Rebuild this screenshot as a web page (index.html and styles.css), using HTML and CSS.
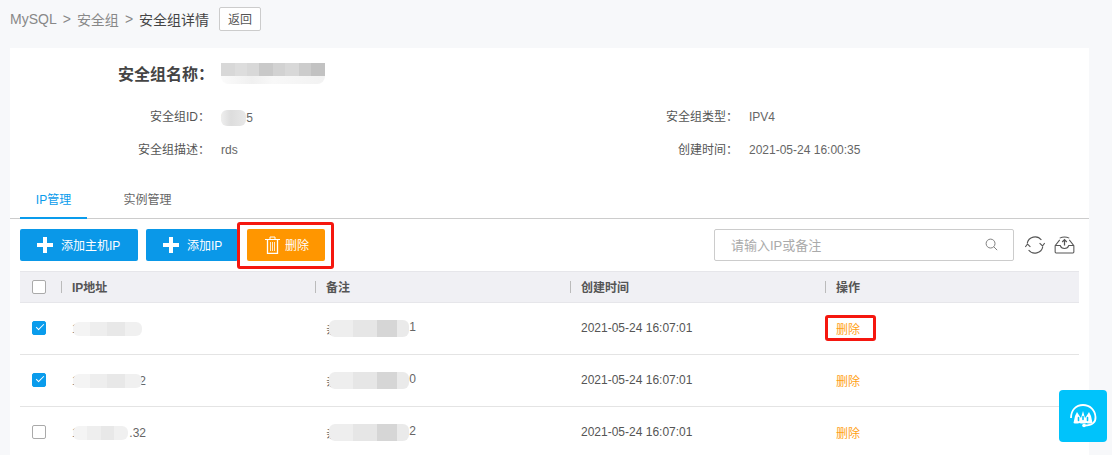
FILE: index.html
```html
<!DOCTYPE html>
<html lang="zh-CN">
<head>
  <meta charset="UTF-8">
  <title>安全组详情</title>
  <link rel="stylesheet" href="styles.css">
</head>
<body>

  <div class="crumbs">
    <span class="crumb">MySQL</span>
    <span class="crumb-sep">&gt;</span>
    <span class="crumb">安全组</span>
    <span class="crumb-sep">&gt;</span>
    <span class="crumb-now">安全组详情</span>
    <button class="back-btn">返回</button>
  </div>

  <div class="card">
    <div class="title-row">
      <span class="title-label">安全组名称：</span>
      <span class="title-mask"></span>
    </div>

    <div class="info">
      <span class="info-label">安全组ID：</span>
      <span class="info-value"><span class="masked masked-id"><i>6</i><i>5</i></span></span>
      <span class="info-label">安全组类型：</span>
      <span class="info-value">IPV4</span>
      <span class="info-label">安全组描述：</span>
      <span class="info-value">rds</span>
      <span class="info-label">创建时间：</span>
      <span class="info-value">2021-05-24 16:00:35</span>
    </div>

    <div class="tabs">
      <a class="tab tab-on">IP管理</a>
      <a class="tab">实例管理</a>
    </div>

    <div class="toolbar">
      <button class="btn btn-blue btn-host">
        <svg class="plus" viewBox="0 0 16 16"><path d="M6 0h4v6h6v4h-6v6H6v-6H0V6h6z"/></svg>
        添加主机IP
      </button>
      <button class="btn btn-blue btn-ip">
        <svg class="plus" viewBox="0 0 16 16"><path d="M6 0h4v6h6v4h-6v6H6v-6H0V6h6z"/></svg>
        添加IP
      </button>
      <button class="btn btn-orange marked">
        <svg class="trash" viewBox="0 0 15 18" fill="none" stroke="#fff" stroke-width="1">
          <path d="M0 3.500h15M5 3V1h5v2"/>
          <path d="M2.500 4v13.500h10V4" stroke-width="1.300"/>
          <path d="M5.500 6v9M7.500 6v9M9.500 6v9" stroke-opacity=".8"/>
        </svg>
        删除
      </button>

      <div class="search">
        <span class="search-text">请输入IP或备注</span>
        <svg class="search-icon" viewBox="0 0 14 14" fill="none" stroke="#777" stroke-width="1">
          <circle cx="6" cy="6" r="4.800"/>
          <path d="M9.500 9.500l3.600 3.600"/>
        </svg>
      </div>
      <svg class="tool-icon refresh" viewBox="0 0 20 20" fill="none" stroke="#555" stroke-width="1.100">
        <path d="M2.200 8.400A8 8 0 0 1 16.400 5"/>
        <path d="M17.800 11.600A8 8 0 0 1 3.600 15"/>
        <path d="M14.600 8.200l2.900 2.800 2.200-3M5.400 11.800L2.500 9 .3 12"/>
      </svg>
      <svg class="tool-icon upload" viewBox="0 0 22 18" fill="none" stroke="#555" stroke-width="1.100">
        <path d="M6 3.600L1.200 9.600v6.800q0 1 1 1h17.600q1 0 1-1V9.600L16 3.600"/>
        <path d="M6 1.800Q11 -.6 16 1.800"/>
        <path d="M1.200 9.600h5.400q.8 3 4.400 3t4.400-3h5.400"/>
        <path d="M11 9.400V3.600M8.600 5.800L11 3.400l2.400 2.400" stroke-width="1.300"/>
      </svg>
    </div>

    <div class="grid-head">
      <div class="cell-check"><span class="check"></span></div>
      <div class="head-cell">IP地址</div>
      <div class="head-cell">备注</div>
      <div class="head-cell">创建时间</div>
      <div class="head-cell">操作</div>
    </div>

    <div class="grid-row">
      <div class="cell-check"><span class="check check-on"></span></div>
      <div class="body-cell"><span class="masked masked-ip"><i>1</i><i></i></span></div>
      <div class="body-cell"><span class="masked masked-note"><i>亲</i><i>1</i></span></div>
      <div class="body-cell">2021-05-24 16:07:01</div>
      <div class="body-cell"><a class="del-link marked-link">删除</a></div>
    </div>
    <div class="grid-row">
      <div class="cell-check"><span class="check check-on"></span></div>
      <div class="body-cell"><span class="masked masked-ip"><i>1</i><i>2</i></span></div>
      <div class="body-cell"><span class="masked masked-note"><i>亲</i><i>0</i></span></div>
      <div class="body-cell">2021-05-24 16:07:01</div>
      <div class="body-cell"><a class="del-link">删除</a></div>
    </div>
    <div class="grid-row">
      <div class="cell-check"><span class="check"></span></div>
      <div class="body-cell"><span class="masked masked-ip masked-short"><i>1</i><i>.32</i></span></div>
      <div class="body-cell"><span class="masked masked-note"><i>亲</i><i>2</i></span></div>
      <div class="body-cell">2021-05-24 16:07:01</div>
      <div class="body-cell"><a class="del-link">删除</a></div>
    </div>
  </div>

  <div class="help">
    <svg viewBox="0 0 28 24" fill="none" stroke="#fff">
      <path d="M2 14C2 6 7 1 14 1s12 5 12.500 12c.4 5-3 8.500-11 8.500" stroke-width="1.800"/>
      <circle cx="15" cy="21.500" r="1.800" fill="#fff" stroke="none"/>
      <path d="M4.500 19l1.500-7 2-4 2.500 4 1.500 2 2-7 2 7 1.500-2 2.500-4 2 4 1.500 7c-2 .8-4 .8-6 0-1.500 .8-5.500 .8-7 0-2 .8-4.500 .8-6 0z" fill="#fff" stroke="none"/>
      <path d="M9.500 13.500v3M14 12.500v3M18.500 13.500v3" stroke="#00c3fb" stroke-width="1.600" stroke-linecap="round"/>
    </svg>
  </div>

</body>
</html>
```

FILE: styles.css
```css
html, body {
  height: 100%;
  overflow: hidden;
}

body {
  margin: 0;
  background: #f7f8fa;
  color: #555;
  font-family: "Liberation Sans", "Noto Sans CJK SC", sans-serif;
  font-size: 12px;
}

/* breadcrumb */
.crumbs {
  display: flex;
  align-items: center;
  height: 48px;
  padding: 0 0 11px 10px;
  box-sizing: border-box;
  font-size: 14px;
  color: #888;
}

.crumb-sep {
  margin: 0 6px 0 6px;
}

.crumb-now {
  color: #444;
}

.back-btn {
  width: 42px;
  height: 24px;
  margin-left: 10px;
  padding: 0;
  background: #fff;
  border: 1px solid #ccc;
  border-radius: 2px;
  color: #555;
  font-family: inherit;
  font-size: 12px;
}

/* card */
.card {
  margin: 0 23px 0 10px;
  height: 420px;
  background: #fff;
}

.title-row {
  display: flex;
  align-items: center;
  height: 50px;
}

.title-label {
  width: 204px;
  margin-right: 7px;
  text-align: right;
  font-size: 16px;
  font-weight: bold;
  color: #444;
}

.title-mask {
  width: 104px;
  height: 21px;
  border-radius: 0 0 8px 8px;
  background:
    linear-gradient(90deg, #d8d8d8 0 13%, #ddd 13% 25%, #d8d8d8 25% 37%, #c9c9c9 37% 50%, #d2d2d2 50% 62%, #d8d8d8 62% 75%, #ccc 75% 87%, #c2c2c2 87%) top / 100% 13px no-repeat,
    linear-gradient(90deg, #fbfbfb, #f0f0f0 30%, #f8f8f8 50%, #f2f2f2);
}

.info {
  display: grid;
  grid-template-columns: 200px 305px 201px 1fr;
  column-gap: 11px;
  row-gap: 16px;
  padding-top: 11px;
  line-height: 16px;
}

.info-label {
  text-align: right;
  color: #555;
}

.info-value {
  color: #666;
}

/* tabs */
.tabs {
  display: flex;
  height: 38px;
  margin-top: 23px;
  padding-left: 10px;
  border-bottom: 1px solid #ccc;
  box-sizing: border-box;
}

.tab {
  width: 67px;
  margin-right: 27px;
  line-height: 38px;
  text-align: center;
  color: #666;
}

.tab-on {
  height: 38px;
  box-sizing: border-box;
  border-bottom: 2px solid #0a9cec;
  color: #0a9cec;
}

/* toolbar */
.toolbar {
  display: flex;
  align-items: center;
  height: 32px;
  margin-top: 10px;
  padding: 0 14px 0 10px;
}

.btn {
  display: flex;
  align-items: center;
  height: 32px;
  padding: 0;
  border: 0;
  border-radius: 2px;
  color: #fff;
  font-family: inherit;
  font-size: 12px;
}

.btn-blue {
  background: #0a98e8;
}

.btn-host {
  width: 118px;
  margin-right: 8px;
  padding-left: 17px;
}

.btn-ip {
  width: 92px;
  margin-right: 9px;
  padding-left: 17px;
}

.btn-orange {
  width: 78px;
  padding-left: 18px;
  background: #ff9600;
  position: relative;
}

.plus {
  width: 16px;
  height: 16px;
  margin-right: 8px;
  fill: #fff;
}

.trash {
  width: 15px;
  height: 18px;
  margin-right: 5px;
}

/* the red annotation boxes drawn over the shot */
.marked::after,
.marked-link::after {
  content: "";
  position: absolute;
  border: 3px solid #f5170f;
  border-radius: 3px;
}

.marked::after {
  top: -7px;
  right: -9px;
  bottom: -8px;
  left: -10px;
}

.search {
  display: flex;
  align-items: center;
  justify-content: space-between;
  width: 300px;
  height: 32px;
  margin-left: auto;
  padding: 0 15px 0 16px;
  box-sizing: border-box;
  background: #fff;
  border: 1px solid #ccc;
  border-radius: 2px;
  color: #aaa;
  font-size: 13px;
}

.search-icon {
  width: 13px;
  height: 13px;
}

.tool-icon {
  flex: none;
}

.refresh {
  width: 20px;
  height: 20px;
  margin-left: 11px;
}

.upload {
  width: 21px;
  height: 18px;
  margin-left: 9px;
}

/* table */
.grid-head,
.grid-row {
  display: grid;
  grid-template-columns: 41px 254px 255px 255px 254px;
  margin: 0 10px;
  align-items: center;
}

.grid-head {
  height: 32px;
  margin-top: 10px;
  background: #f0f0f4;
  border-top: 1px solid #e6e6ea;
  border-bottom: 1px solid #e6e6ea;
  box-sizing: border-box;
  font-weight: bold;
  color: #555;
}

.grid-row {
  height: 52px;
  border-bottom: 1px solid #e4e4e4;
  box-sizing: border-box;
  color: #555;
}

.cell-check {
  display: flex;
  padding-left: 12px;
}

.check {
  width: 14px;
  height: 14px;
  box-sizing: border-box;
  background: #fff;
  border: 1px solid #aaa;
  border-radius: 2px;
  position: relative;
}

.check-on {
  background: #0a9cec;
  border-color: #0a9cec;
}

.check-on::after {
  content: "";
  position: absolute;
  left: 3px;
  top: 2px;
  width: 7px;
  height: 3px;
  border-left: 1px solid #fff;
  border-bottom: 1px solid #fff;
  transform: rotate(-45deg);
}

.head-cell {
  display: flex;
  align-items: center;
}

.head-cell::before {
  content: "";
  width: 1px;
  height: 12px;
  margin-right: 10px;
  background: #bbb;
}

.body-cell {
  padding-left: 11px;
}

.del-link {
  color: #ff9f14;
  position: relative;
  display: inline-block;
}

.marked-link::after {
  top: -5px;
  right: -16px;
  bottom: -4px;
  left: -11px;
}

/* blurred-out values */
.masked {
  position: relative;
  display: inline-flex;
  justify-content: space-between;
  vertical-align: middle;
  color: #666;
}

.masked i {
  font-style: normal;
}

.masked::after {
  content: "";
  position: absolute;
  top: 0;
  bottom: 0;
  border-radius: 6px;
}

.masked-id {
  width: 32px;
}

.masked-id::after {
  left: 0;
  right: 7px;
  background: linear-gradient(90deg, #eee, #ddd 40%, #e8e8e8);
}

.masked-ip {
  width: 74px;
}

.masked-ip::after {
  left: 1px;
  right: 4px;
  background: linear-gradient(90deg, #f4f4f4 0 25%, #eee 25% 50%, #e8e8e8 50% 75%, #f0f0f0 75%);
}

.masked-short::after {
  right: 18px;
}

.masked-note {
  width: 90px;
}

.masked-note::after {
  left: 3px;
  right: 7px;
  background: linear-gradient(90deg, #eee 0 30%, #e6e6e6 30% 60%, #d6d6d6 60% 85%, #eaeaea 85%);
}

/* floating help button */
.help {
  position: fixed;
  left: 1059px;
  top: 390px;
  display: flex;
  align-items: center;
  justify-content: center;
  width: 48px;
  height: 52px;
  background: #00c3fb;
  border-radius: 4px;
}

.help svg {
  width: 28px;
  height: 24px;
}
```
